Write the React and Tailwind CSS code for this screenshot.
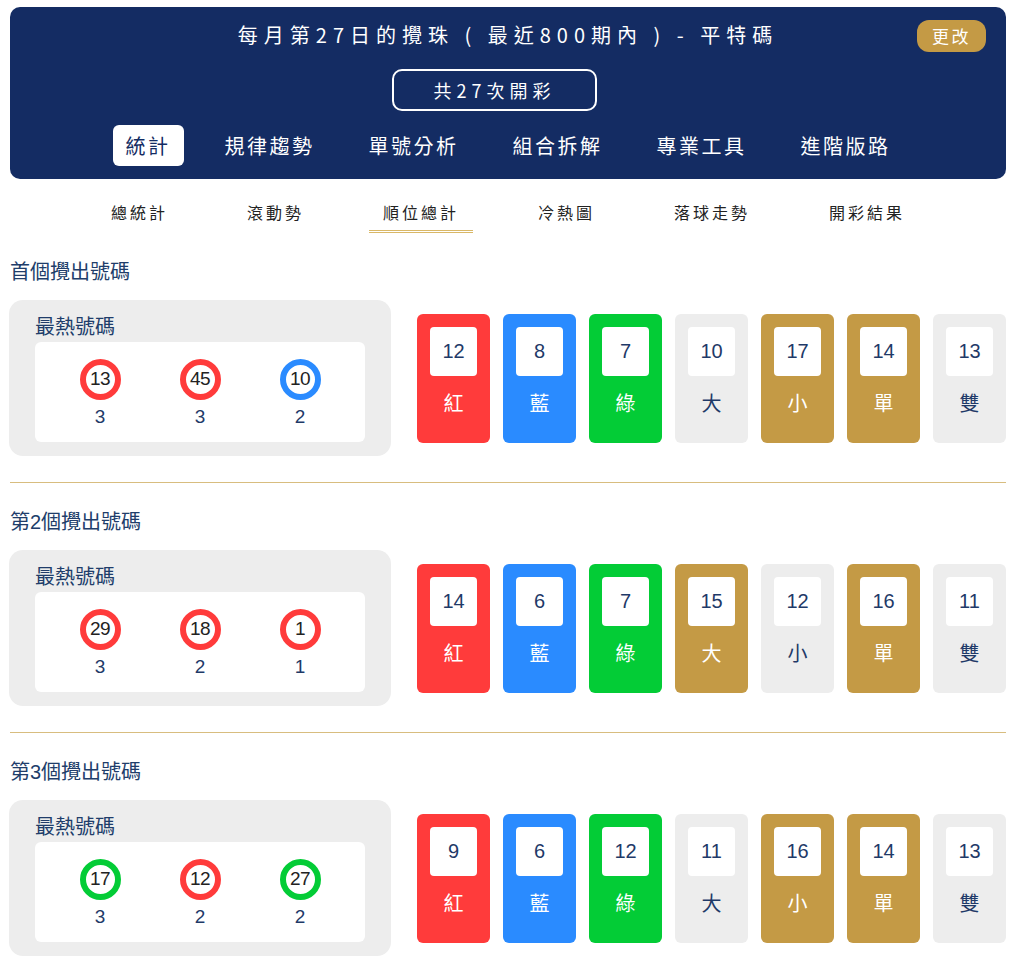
import { useState } from 'react';

const FONT = "font-['Liberation_Sans','Noto_Sans_CJK_TC',sans-serif]";

const ballColors = {
  red: 'border-[#ff3b3b]',
  blue: 'border-[#2a8bff]',
  green: 'border-[#03cc36]',
};

const tileColors = {
  red: 'bg-[#ff3b3b] text-white',
  blue: 'bg-[#2a8bff] text-white',
  green: 'bg-[#03cc36] text-white',
  gold: 'bg-[#c49a45] text-white',
  gray: 'bg-[#ededed] text-[#1f3a68]',
};

const sections = [
  {
    title: '首個攪出號碼',
    hot: [
      { num: 13, color: 'red', count: 3 },
      { num: 45, color: 'red', count: 3 },
      { num: 10, color: 'blue', count: 2 },
    ],
    tiles: [
      { v: 12, label: '紅', c: 'red' },
      { v: 8, label: '藍', c: 'blue' },
      { v: 7, label: '綠', c: 'green' },
      { v: 10, label: '大', c: 'gray' },
      { v: 17, label: '小', c: 'gold' },
      { v: 14, label: '單', c: 'gold' },
      { v: 13, label: '雙', c: 'gray' },
    ],
  },
  {
    title: '第2個攪出號碼',
    hot: [
      { num: 29, color: 'red', count: 3 },
      { num: 18, color: 'red', count: 2 },
      { num: 1, color: 'red', count: 1 },
    ],
    tiles: [
      { v: 14, label: '紅', c: 'red' },
      { v: 6, label: '藍', c: 'blue' },
      { v: 7, label: '綠', c: 'green' },
      { v: 15, label: '大', c: 'gold' },
      { v: 12, label: '小', c: 'gray' },
      { v: 16, label: '單', c: 'gold' },
      { v: 11, label: '雙', c: 'gray' },
    ],
  },
  {
    title: '第3個攪出號碼',
    hot: [
      { num: 17, color: 'green', count: 3 },
      { num: 12, color: 'red', count: 2 },
      { num: 27, color: 'green', count: 2 },
    ],
    tiles: [
      { v: 9, label: '紅', c: 'red' },
      { v: 6, label: '藍', c: 'blue' },
      { v: 12, label: '綠', c: 'green' },
      { v: 11, label: '大', c: 'gray' },
      { v: 16, label: '小', c: 'gold' },
      { v: 14, label: '單', c: 'gold' },
      { v: 13, label: '雙', c: 'gray' },
    ],
  },
];

const mainTabs = ['統計', '規律趨勢', '單號分析', '組合拆解', '專業工具', '進階版路'];
const subTabs = ['總統計', '滾動勢', '順位總計', '冷熱圖', '落球走勢', '開彩結果'];

function Section({ data }) {
  return (
    <div className="pt-[26px] pb-[26px] border-b border-[#d8bd7f]">
      <h2 className="text-[20px] leading-[26px] text-[#203d6a]">{data.title}</h2>
      <div className="mt-[15px] flex items-center gap-[26px]">
        {/* hot numbers */}
        <div className="w-[382px] h-[156px] -ml-px shrink-0 rounded-[14px] bg-[#ededed] px-[26px] pt-[15px]">
          <div className="text-[20px] leading-[24px] text-[#203d6a]">最熱號碼</div>
          <div className="mt-[3px] h-[100px] rounded-[6px] bg-white flex justify-center pt-[17px]">
            {data.hot.map((b, i) => (
              <div key={i} className="w-[100px] flex flex-col items-center">
                <div className={`w-[41px] h-[41px] rounded-full border-[6px] bg-white flex items-center justify-center text-[19px] text-[#222] tracking-[-0.5px] ${ballColors[b.color]}`}>
                  {b.num}
                </div>
                <div className="mt-[6px] text-[19px] leading-[22px] text-[#1f3a68]">{b.count}</div>
              </div>
            ))}
          </div>
        </div>

        {/* tiles */}
        <div className="flex-1 flex gap-[13px]">
          {data.tiles.map((t, i) => (
            <div key={i} className={`flex-1 h-[129px] rounded-[6px] flex flex-col items-center pt-[13px] ${tileColors[t.c]}`}>
              <div className="w-[47px] h-[49px] rounded-[4px] bg-white flex items-center justify-center text-[20px] text-[#1f3a68]">
                {t.v}
              </div>
              <div className="mt-[16px] text-[20px] leading-[24px]">{t.label}</div>
            </div>
          ))}
        </div>
      </div>
    </div>
  );
}

export default function App() {
  const [tab, setTab] = useState(0);
  const [sub, setSub] = useState(2);

  return (
    <div className={`${FONT} bg-white min-h-screen pl-[10px] pr-[17px] pt-[7px]`}>
      {/* Header */}
      <div className="relative bg-[#142c63] rounded-[10px] pt-[14px] pb-[13px] flex flex-col items-center">
        <div className="text-white text-[20px] leading-[28px] tracking-[6px] font-['Noto_Sans_CJK_TC',sans-serif]">
          每月第27日的攪珠 ( 最近800期內 ) - 平特碼
        </div>
        <button className="absolute right-[20px] top-[13px] w-[69px] h-[32px] rounded-[12px] bg-[#c49a45] text-white text-[17px] tracking-[2.5px] font-['Noto_Sans_CJK_TC',sans-serif]">
          更改
        </button>
        <div className="mt-[20px] mr-[27px] w-[205px] h-[42px] rounded-[10px] border-2 border-white flex items-center justify-center text-white text-[18px] tracking-[5px] font-['Noto_Sans_CJK_TC',sans-serif]">
          共27次開彩
        </div>
        <div className="mt-[14px] flex justify-center gap-[28px]">
          {mainTabs.map((t, i) => (
            <button
              key={t}
              onClick={() => setTab(i)}
              className={`h-[41px] px-[13px] rounded-[6px] text-[20px] tracking-[2.5px] font-['Noto_Sans_CJK_TC',sans-serif] ${tab === i ? 'bg-white text-[#142c63]' : 'text-white'}`}
            >
              {t}
            </button>
          ))}
        </div>
      </div>

      {/* Sub tabs */}
      <div className="mt-[21px] flex justify-center gap-[51px]">
        {subTabs.map((t, i) => (
          <button
            key={t}
            onClick={() => setSub(i)}
            className={`px-[14px] pb-[6px] text-[16px] leading-[24px] tracking-[3px] text-[#222] font-['Noto_Sans_CJK_TC',sans-serif] border-b-[3px] ${sub === i ? 'border-double border-[#d9b868]' : 'border-transparent'}`}
          >
            {t}
          </button>
        ))}
      </div>

      {sections.map((s) => (
        <Section key={s.title} data={s} />
      ))}
    </div>
  );
}
